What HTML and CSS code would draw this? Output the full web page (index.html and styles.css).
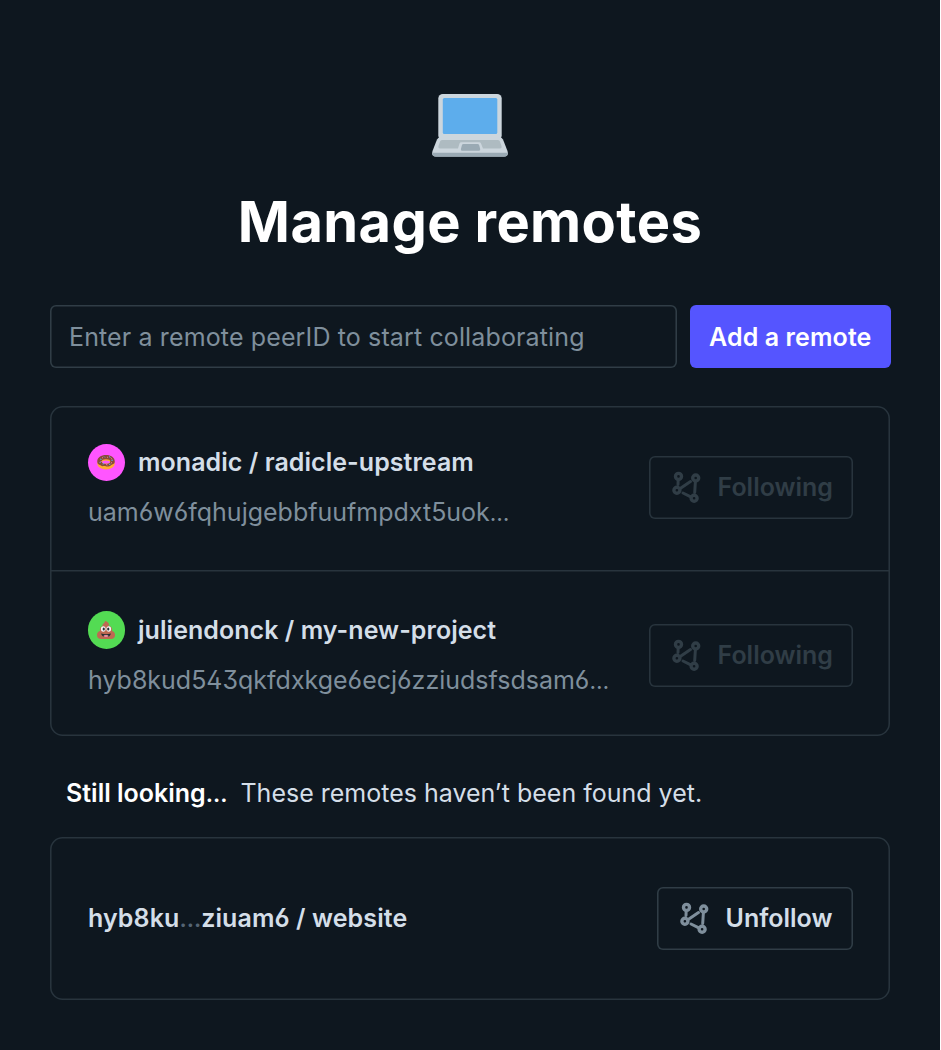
FILE: index.html
```
<!DOCTYPE html>
<html lang="en">
<head>
<meta charset="utf-8">
<title>Manage remotes</title>
<link rel="stylesheet" href="styles.css">
</head>
<body>
<svg class="defs" aria-hidden="true">
  <symbol id="network" viewBox="0 0 30 32">
    <g fill="none" stroke="currentColor" stroke-width="3.4">
      <circle cx="6.500" cy="5.400" r="3"/>
      <circle cx="23.700" cy="7" r="3"/>
      <circle cx="4.900" cy="19.300" r="3"/>
      <circle cx="22.100" cy="27.300" r="3"/>
      <path stroke-width="3" stroke-linecap="round" d="M6.200 8.600L6 13.500M8.200 17.400L18.500 10.500M23.400 10.500L22.700 21.500M11 22L18.800 25.800"/>
    </g>
  </symbol>
</svg>
<main class="page">
  <header class="header">
    <svg class="laptop" viewBox="0 0 76 64" aria-hidden="true">
      <rect x="6.3" y="0" width="63.4" height="46" rx="4.5" fill="#ccd6dd"/>
      <rect x="10.8" y="4" width="54.5" height="36" rx="1.5" fill="#5dadec"/>
      <path d="M8 43.5H68Q70 43.5 71 45.500L75.500 57Q77 62.500 72 62.500H4Q-1 62.500 .5 57L5 45.500Q6 43.500 8 43.500Z" fill="#ccd6dd"/>
      <path d="M.3 58.700H75.700Q76 62.700 72 62.700H4Q0 62.700 .3 58.700Z" fill="#9aaab4"/>
      <path d="M10 46H66Q67.500 46 68 47.500L69.500 52Q70 54.500 68 54.500H51L49 49.500Q48.600 48.300 47 48.300H29.500Q28 48.300 27.500 49.500L26 54.500H8Q6 54.500 6.500 52L8 47.500Q8.500 46 10 46Z" fill="#aebbc1"/>
      <path d="M31.500 50H45.500Q46.800 50 47.200 51.200L48.200 55Q48.500 56.700 47 56.700H30Q28.500 56.700 28.900 55L29.900 51.200Q30.200 50 31.500 50Z" fill="#9aaab4"/>
    </svg>
    <h1 class="title">Manage remotes</h1>
  </header>
  <form class="add">
    <div class="field">Enter a remote peerID to start collaborating</div>
    <button class="add-button" type="button">Add a remote</button>
  </form>
  <section class="card">
    <div class="row first">
      <div class="info">
        <div class="name-line">
          <span class="avatar pink">
            <svg viewBox="0 0 36 36" aria-hidden="true">
              <ellipse cx="18" cy="21" rx="17.500" ry="12" fill="#ffac33"/>
              <path d="M18 4C8 4 .5 9 .5 17c0 5 3 6 5 7 3 1 4 3 8 2 3-1 5 2 9 1 4 0 5-3 8-4 3-1 5-2 5-6 0-8-7.500-13-17.500-13z" fill="#8a4b38"/>
              <ellipse cx="18" cy="17" rx="8.500" ry="4.500" fill="#ffac33"/>
              <ellipse cx="18" cy="18" rx="7.500" ry="3" fill="#ff55ff"/>
              <path d="M6 12l3 1M14 7l2 2M24 7l3 2M29 15l3-1M5 19l3-1M12 23l1-3M24 23l3-1" stroke="#55acee" stroke-width="2"/>
              <path d="M10 9l2 1M20 9l2-1M28 11l2 1M8 16l1 2M18 23l3 1M28 19l2 1" stroke="#ea7892" stroke-width="2"/>
            </svg>
          </span>
          <span class="name">monadic / radicle-upstream</span>
        </div>
        <div class="peer">uam6w6fqhujgebbfuufmpdxt5uok<span class="ellipsis">…</span></div>
      </div>
      <button class="follow" type="button" disabled><svg class="icon"><use href="#network"/></svg><span>Following</span></button>
    </div>
    <div class="row second">
      <div class="info">
        <div class="name-line">
          <span class="avatar green">
            <svg viewBox="0 0 36 36" aria-hidden="true">
              <path d="M16 0c5 1 8 4 8 7 0 1 0 2-1 3 5 0 8 4 7 10 4 1 6 4 6 8 0 5-3 8-8 8H8c-5 0-8-3-8-8 0-4 2-7 6-8-1-5 1-9 5-10-1-5 5-5 5-10z" fill="#bf6952"/>
              <ellipse cx="12.500" cy="16" rx="4.700" ry="5.500" fill="#f5f8fa"/>
              <ellipse cx="23.500" cy="16" rx="4.700" ry="5.500" fill="#f5f8fa"/>
              <ellipse cx="13.500" cy="16" rx="2.200" ry="3" fill="#292f33"/>
              <ellipse cx="22.500" cy="16" rx="2.200" ry="3" fill="#292f33"/>
              <path d="M8 25Q18 28 28 25Q26 32 18 32T8 25Z" fill="#292f33"/>
              <ellipse cx="18" cy="30" rx="5" ry="2" fill="#f28fa6"/>
            </svg>
          </span>
          <span class="name">juliendonck / my-new-project</span>
        </div>
        <div class="peer long">hyb8kud543qkfdxkge6ecj6zziudsfsdsam6<span class="ellipsis">…</span></div>
      </div>
      <button class="follow" type="button" disabled><svg class="icon"><use href="#network"/></svg><span>Following</span></button>
    </div>
  </section>
  <p class="status"><strong>Still looking<span class="ellipsis">…</span></strong><span>These remotes haven’t been found yet.</span></p>
  <section class="card">
    <div class="row pending">
      <span class="name">hyb8ku<span class="ellipsis dots">…</span>ziuam6 / website</span>
      <button class="follow active" type="button"><svg class="icon"><use href="#network"/></svg><span>Unfollow</span></button>
    </div>
  </section>
</main>
</body>
</html>
```
FILE: styles.css
```
* {
  box-sizing: border-box;
}

body {
  margin: 0;
  background: #fff;
  font-family: Inter, "Liberation Sans", sans-serif;
  font-size: 25px;
  line-height: 38px;
  font-feature-settings: "ss01" 1;
}

.defs {
  position: absolute;
  width: 0;
  height: 0;
}

.page {
  width: 940px;
  height: 1050px;
  padding: 94px 50px 0;
  background: #0e171f;
  color: #d4dee8;
}

.header {
  display: flex;
  flex-direction: column;
  align-items: center;
}

.laptop {
  width: 76px;
  height: 64px;
}

.title {
  margin: 28px 0 0;
  font-size: 56px;
  line-height: 72px;
  font-weight: 700;
  letter-spacing: 0.38px;
  color: #fff;
  white-space: nowrap;
}

.add {
  display: flex;
  gap: 12.5px;
  width: 841px;
  margin: 47px 0 0;
}

.field {
  width: 627px;
  height: 63px;
  padding: 12.5px 19px;
  border-radius: 6px;
  box-shadow: inset 0 0 0 1.57px #303d46;
  color: #7f8f9c;
  letter-spacing: 0.13px;
  white-space: nowrap;
}

button {
  padding: 0;
  border: 0;
  background: none;
  font: inherit;
  font-weight: 600;
  white-space: nowrap;
}

.add-button {
  width: 201.5px;
  height: 63px;
  border-radius: 6px;
  background: #5555ff;
  color: #fff;
  letter-spacing: 0.1px;
}

.card {
  width: 840px;
  margin-top: 38px;
  border-radius: 12.5px;
  box-shadow: inset 0 0 0 1.57px #28343d;
}

.row {
  display: flex;
  align-items: center;
  justify-content: space-between;
  height: 164px;
  padding: 0 37.5px 0 37.5px;
}

.first {
  padding-bottom: 1.5px;
}

.second {
  height: 166px;
  padding-top: 4px;
  box-shadow: inset 0 1.57px #28343d;
}

.name-line {
  display: flex;
  align-items: center;
  gap: 13px;
  height: 38px;
  margin-bottom: 12px;
}

.avatar {
  display: flex;
  align-items: center;
  justify-content: center;
  width: 37.5px;
  height: 37.5px;
  border-radius: 50%;
}

.avatar svg {
  width: 18px;
  height: 18px;
}

.pink {
  background: #ff55ff;
}

.green {
  background: #53db53;
}

.name {
  font-weight: 600;
  letter-spacing: 0.05px;
  white-space: nowrap;
}

.peer {
  padding-left: 0.5px;
  color: #7f8f9c;
  white-space: nowrap;
}

.follow {
  display: flex;
  align-items: center;
  gap: 16px;
  width: 204px;
  height: 63px;
  padding-left: 23px;
  border-radius: 6px;
  box-shadow: inset 0 0 0 1.57px #28343d;
  color: #303d46;
}

.active {
  width: 196px;
  color: #d4dee8;
  box-shadow: inset 0 0 0 1.57px #303d46;
}

.icon {
  width: 30px;
  height: 32px;
}

.active .icon {
  color: #7f8f9c;
}

.status {
  display: flex;
  gap: 13px;
  margin: 38px 0 0;
  padding-left: 16px;
  white-space: nowrap;
}

.status strong {
  font-weight: 600;
  color: #fff;
}

.ellipsis {
  font-size: 0.91em;
  line-height: 1;
}

.status + .card {
  margin-top: 24.5px;
}

.pending {
  height: 163px;
}

.pending .name {
  padding-left: 0.5px;
  letter-spacing: 0.09px;
}

.dots {
  color: #546474;
}
```
